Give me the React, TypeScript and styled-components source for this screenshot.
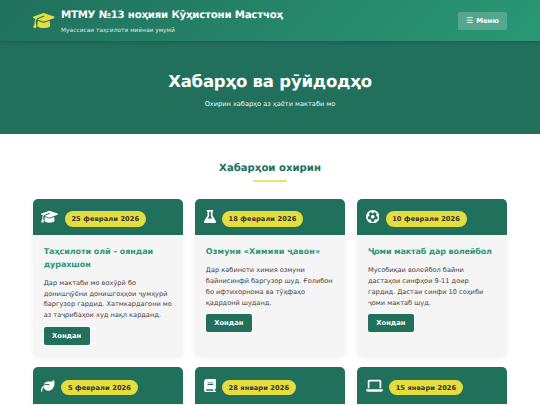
import styled, { createGlobalStyle } from "styled-components";
import { FaBook, FaFlask, FaFutbol, FaGraduationCap, FaLaptop, FaLeaf } from "react-icons/fa6";
import { IconType } from "react-icons";

const GlobalStyle = createGlobalStyle`
  * {
    margin: 0;
    padding: 0;
    box-sizing: border-box;
  }
  body {
    background: #fff;
    color: #333;
    font-family: Verdana, "DejaVu Sans", sans-serif;
    text-rendering: geometricPrecision;
  }
`;

const Page = styled.div`
  height: 405px;
  overflow: hidden;
`;

const Header = styled.header`
  position: relative;
  display: flex;
  align-items: center;
  justify-content: space-between;
  height: 41px;
  padding: 0 33px;
  background: linear-gradient(135deg, #20705c, #2a9875);
  box-shadow: 0 1px 4px rgba(0, 0, 0, 0.2);
`;

const Brand = styled.div`
  display: flex;
  align-items: center;
  gap: 6.5px;
`;

const BrandIcon = styled(FaGraduationCap)`
  width: 21.5px;
  height: 17.2px;
  margin-top: 1px;
  color: #e5dc3e;
`;

const BrandName = styled.div`
  padding-top: 3px;
  color: #fff;
  font-size: 10.2px;
  font-weight: bold;
  letter-spacing: -0.2px;
  line-height: 18px;
  white-space: nowrap;
`;

const BrandSub = styled.div`
  color: rgba(255, 255, 255, 0.85);
  font-size: 5.9px;
  line-height: 12px;
  white-space: nowrap;
`;

const MenuBtn = styled.button`
  display: flex;
  align-items: center;
  justify-content: center;
  gap: 3px;
  width: 49px;
  height: 18px;
  border: 0;
  border-radius: 2px;
  background: rgba(255, 255, 255, 0.2);
  color: #fff;
  font-family: inherit;
  font-size: 6.8px;
  font-weight: bold;
  white-space: nowrap;
`;

const Burger = styled.span`
  font-size: 7.8px;
  font-weight: normal;
  line-height: 8px;
`;

const Hero = styled.section`
  height: 93px;
  padding-top: 27px;
  background: #20705c;
  color: #fff;
  text-align: center;
`;

const HeroTitle = styled.h1`
  font-size: 16.5px;
  letter-spacing: -0.2px;
  line-height: 27px;
`;

const HeroText = styled.p`
  margin-top: 3px;
  font-size: 6.6px;
  line-height: 12px;
  opacity: 0.95;
`;

const Section = styled.main`
  padding: 25.5px 33px 0;
`;

const SectionTitle = styled.h2`
  color: #20705c;
  font-size: 10.15px;
  line-height: 17px;
  text-align: center;
  &::after {
    content: "";
    display: block;
    width: 34px;
    height: 2px;
    margin: 3.5px auto 0;
    background: #ebe36f;
  }
`;

const Grid = styled.div`
  display: grid;
  grid-template-columns: repeat(3, 1fr);
  gap: 11px 12.4px;
  margin-top: 16.7px;
`;

const Card = styled.article`
  height: 157.6px;
  overflow: hidden;
  border-radius: 5px;
  background: #f5f5f5;
  box-shadow: 0 2px 6px rgba(0, 0, 0, 0.06);
`;

const CardHead = styled.div<{ $iconWidth: number }>`
  display: flex;
  gap: 6.4px;
  height: 36.3px;
  padding: 11.3px 8.4px 0;
  background: #20705c;
  color: #fff;
  svg {
    flex: none;
    width: ${(props) => props.$iconWidth}px;
    height: 13.5px;
  }
`;

const DateTag = styled.span`
  height: 15.5px;
  margin-top: 1.2px;
  padding: 0 6.6px;
  border-radius: 8px;
  background: #e5dc3e;
  color: #333;
  font-size: 6.65px;
  font-weight: bold;
  letter-spacing: 0.1px;
  line-height: 16px;
  white-space: nowrap;
`;

const CardBody = styled.div`
  padding: 11.5px 0 0 10.7px;
`;

const CardTitle = styled.h3<{ $spacing?: number }>`
  color: #2a9875;
  font-size: 8px;
  letter-spacing: ${(props) => props.$spacing ?? 0}px;
  line-height: 12.7px;
  white-space: nowrap;
`;

const CardText = styled.div`
  margin: 6px 0 5.8px;
  color: #444;
  font-size: 6.6px;
  line-height: 10.8px;
  white-space: nowrap;
`;

const ReadBtn = styled.a`
  display: block;
  width: 46px;
  height: 18px;
  border-radius: 2px;
  background: #20705c;
  color: #fff;
  font-size: 6.75px;
  font-weight: bold;
  line-height: 18px;
  text-align: center;
`;

interface News {
  icon: IconType;
  iconWidth: number;
  date: string;
  title: string[];
  spacing?: number;
  text: string[];
}

const news: News[] = [
  {
    icon: FaGraduationCap,
    iconWidth: 17,
    date: "25 феврали 2026",
    title: ["Таҳсилоти олӣ – ояндаи", "дурахшон"],
    spacing: -0.07,
    text: [
      "Дар мактаби мо вохӯрӣ бо",
      "донишҷӯёни донишгоҳҳои ҷумҳурӣ",
      "баргузор гардид. Хатмкардагони мо",
      "аз таҷрибаҳои худ нақл карданд.",
    ],
  },
  {
    icon: FaFlask,
    iconWidth: 12,
    date: "18 феврали 2026",
    title: ["Озмуни «Химияи ҷавон»"],
    spacing: 0.12,
    text: [
      "Дар кабинети химия озмуни",
      "байнисинфӣ баргузор шуд. Ғолибон",
      "бо ифтихорнома ва тӯҳфаҳо",
      "қадрдонӣ шуданд.",
    ],
  },
  {
    icon: FaFutbol,
    iconWidth: 13.5,
    date: "10 феврали 2026",
    title: ["Ҷоми мактаб дар волейбол"],
    spacing: -0.15,
    text: [
      "Мусобиқаи волейбол байни",
      "дастаҳои синфҳои 9-11 доир",
      "гардид. Дастаи синфи 10 соҳиби",
      "ҷоми мактаб шуд.",
    ],
  },
  { icon: FaLeaf, iconWidth: 13.5, date: "5 феврали 2026", title: [], text: [] },
  { icon: FaBook, iconWidth: 12, date: "28 январи 2026", title: [], text: [] },
  { icon: FaLaptop, iconWidth: 17, date: "15 январи 2026", title: [], text: [] },
];

function NewsCard({ icon: Icon, iconWidth, date, title, spacing, text }: News) {
  return (
    <Card>
      <CardHead $iconWidth={iconWidth}>
        <Icon />
        <DateTag>{date}</DateTag>
      </CardHead>
      {title.length > 0 && (
        <CardBody>
          <CardTitle $spacing={spacing}>
            {title.map((line) => (
              <div key={line}>{line}</div>
            ))}
          </CardTitle>
          <CardText>
            {text.map((line) => (
              <div key={line}>{line}</div>
            ))}
          </CardText>
          <ReadBtn>Хондан</ReadBtn>
        </CardBody>
      )}
    </Card>
  );
}

export default function App() {
  return (
    <Page>
      <GlobalStyle />
      <Header>
        <Brand>
          <BrandIcon />
          <div>
            <BrandName>МТМУ №13 ноҳияи Кӯҳистони Мастчоҳ</BrandName>
            <BrandSub>Муассисаи таҳсилоти миёнаи умумӣ</BrandSub>
          </div>
        </Brand>
        <MenuBtn>
          <Burger>☰</Burger>
          Меню
        </MenuBtn>
      </Header>
      <Hero>
        <HeroTitle>Хабарҳо ва рӯйдодҳо</HeroTitle>
        <HeroText>Охирин хабарҳо аз ҳаёти мактаби мо</HeroText>
      </Hero>
      <Section>
        <SectionTitle>Хабарҳои охирин</SectionTitle>
        <Grid>
          {news.map((item) => (
            <NewsCard key={item.date} {...item} />
          ))}
        </Grid>
      </Section>
    </Page>
  );
}
